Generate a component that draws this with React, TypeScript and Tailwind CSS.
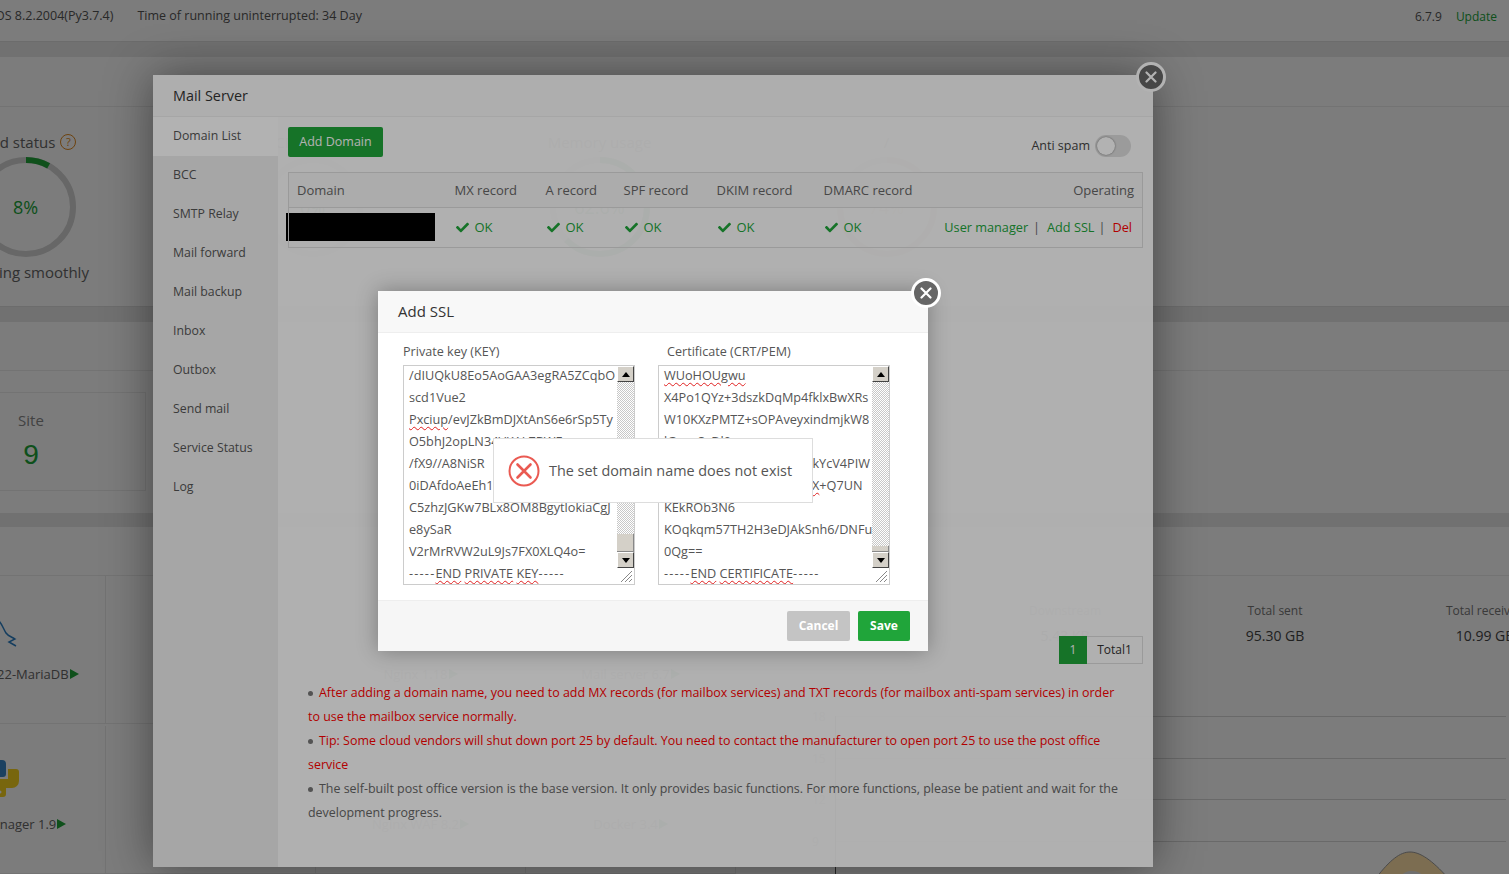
import React from 'react'
import { FaCheck } from 'react-icons/fa'

const font = "font-['Open_Sans','Noto_Sans',sans-serif]"
const squiggle = 'underline decoration-wavy decoration-[#e02020] decoration-1 underline-offset-2'

function Ring({ title, value, label, pct, color, help }: { title: string; value: string; label?: string; pct: number; color: string; help?: boolean }) {
  const c = 2 * Math.PI * 47
  return (
    <div className="w-[287px] shrink-0 flex flex-col items-center pt-[25px]">
      <div className="flex items-center gap-[5px] h-[20px] text-[15px] text-[#666]">
        {title}
        {help && (
          <span className="w-[16px] h-[16px] rounded-full border border-[#e08a20] text-[#e08a20] text-[11px] flex items-center justify-center">?</span>
        )}
      </div>
      <div className="relative w-[100px] h-[100px] mt-[5px]">
        <svg width="100" height="100" viewBox="0 0 100 100">
          <circle cx="50" cy="50" r="47" fill="none" stroke="#d4d4d4" strokeWidth="6" />
          <circle
            cx="50"
            cy="50"
            r="47"
            fill="none"
            stroke={color}
            strokeWidth="6"
            strokeDasharray={`${(c * pct) / 100} ${c}`}
            transform="rotate(-90 50 50)"
          />
        </svg>
        <div className="absolute inset-0 flex items-center justify-center text-[18px]" style={{ color }}>
          {value}
        </div>
      </div>
      {label && <div className="mt-[5px] text-[15px] leading-[20px] text-[#666] whitespace-nowrap">{label}</div>}
    </div>
  )
}

function Soft({ name, icon }: { name: string; icon?: React.ReactNode }) {
  return (
    <div className="w-[210px] h-[148px] shrink-0 border-r border-b border-[#ececec] flex flex-col items-center">
      <div className="h-[79px] mt-[5px] flex items-end justify-center">{icon}</div>
      <div className="mt-[5px] flex items-center text-[13px] leading-[18px] text-[#666] whitespace-nowrap">
        {name}
        <span className="ml-[1px] w-0 h-0 border-y-[5px] border-y-transparent border-l-[9px] border-l-[#20a53a]" />
      </div>
    </div>
  )
}

function Stat({ title, value }: { title: string; value: string }) {
  return (
    <div className="w-[210px] shrink-0 flex flex-col items-center">
      <div className="text-[12px] leading-[18px] text-[#777] whitespace-nowrap">{title}</div>
      <div className="mt-[6px] text-[14px] leading-[20px] text-[#444] whitespace-nowrap">{value}</div>
    </div>
  )
}

function AxisRow({ label, className }: { label: string; className: string }) {
  return (
    <div className={`relative border-t border-[#d8d8d8] ${className}`}>
      <span className="absolute left-[-24px] top-[-9px] text-[12px] leading-[18px] text-[#888]">{label}</span>
    </div>
  )
}

function Page() {
  return (
    <div className="bg-[#e8e8e8]">
      <div className="h-[42px] pb-[8px] bg-white border-b border-[#dedede] flex items-center justify-between text-[12.5px] text-[#555] pr-[12px]">
        <div className="flex ml-[-32px] gap-[24px]">
          <span>CentOS 8.2.2004(Py3.7.4)</span>
          <span>Time of running uninterrupted: 34 Day</span>
        </div>
        <div className="flex gap-[14px] text-[12px]">
          <span>6.7.9</span>
          <span className="text-[#20a53a]">Update</span>
        </div>
      </div>

      <section className="mt-[15px] h-[250px] bg-white border-b border-[#dedede]">
        <div className="h-[50px] border-b border-[#ececec]" />
        <div className="flex ml-[-118px]">
          <Ring title="Load status" value="8%" label="Running smoothly" pct={8} color="#20a53a" help />
          <Ring title="CPU usage" value="0%" pct={0} color="#20a53a" />
          <Ring title="Memory usage" value="62.6%" pct={62.6} color="#20a53a" />
          <Ring title="/" value="74%" pct={74} color="#e8c89a" />
        </div>
      </section>

      <section className="mt-[15px] h-[191px] bg-white">
        <div className="h-[49px] border-b border-[#ececec]" />
        <div className="ml-[-84px] mt-[21px] w-[230px] h-[99px] border border-[#ececec] flex flex-col items-center">
          <div className="mt-[17px] text-[15px] leading-[20px] text-[#888]">Site</div>
          <div className="mt-[8px] text-[28px] leading-[34px] text-[#20a53a] font-['Liberation_Sans',sans-serif]">9</div>
        </div>
      </section>

      <section className="mt-[14px] h-[400px] bg-white">
        <div className="h-[49px] border-b border-[#ececec]" />
        <div className="flex">
          <div className="ml-[-104px] w-[840px] shrink-0 flex flex-wrap">
            <Soft
              name="MySQL 10.4.22-MariaDB"
              icon={
                <svg width="32" height="30" viewBox="0 0 32 30" className="ml-[28px] mb-[9px]">
                  <path d="M0 0C3 3 5 9 7 12C9 15 13 16 16 18L10 21L17 25" fill="none" stroke="#2b7fc4" strokeWidth="1.5" />
                </svg>
              }
            />
            <Soft
              name="DNS Manager 2.6"
              icon={
                <div className="w-[46px] h-[46px] rounded-full border-4 border-[#e0d8d0] flex items-center justify-center text-[14px] font-bold text-[#e0d8d0] mb-[9px]">
                  DNS
                </div>
              }
            />
            <Soft name="Nginx 1.18" />
            <Soft name="Mail server 6.7" />
            <Soft
              name="Python Manager 1.9"
              icon={
                <svg width="38" height="38" viewBox="0 0 38 38" className="mb-[13px]">
                  <path d="M10 1h10a4 4 0 0 1 4 4v10a3 3 0 0 1-3 3H10v-2H0V5a4 4 0 0 1 4-4z" fill="#3a87c8" />
                  <path d="M26 10h8a3 3 0 0 1 3 3v9a7 7 0 0 1-7 7h-6v6a3 3 0 0 1-3 3h-8v-4l-2-14h15z" fill="#f6d21f" />
                  <circle cx="18" cy="33" r="1.5" fill="#fff" />
                </svg>
              }
            />
            <Soft
              name="Linux Tools 1.5"
              icon={
                <svg width="36" height="34" viewBox="0 0 36 34" fill="none" stroke="#dce0dc" strokeWidth="2" className="mb-[15px]">
                  <path d="M1 8h34v25H1zM10 8V1h16v7M1 18h12M23 18h12M13 16h10v5H13z" />
                </svg>
              }
            />
            <Soft name="Nginx WAF 8.2" />
            <Soft name="Docker 3.4" />
          </div>
          <div className="flex-1 min-w-0 flex flex-col">
            <div className="flex ml-[14px] pt-[26px]">
              <Stat title="Upstream" value="3.58 KB" />
              <Stat title="Downstream" value="5.43 KB" />
              <Stat title="Total sent" value="95.30 GB" />
              <Stat title="Total received" value="10.99 GB" />
            </div>
            <div className="relative mt-[70px] mr-[3px] ml-[99px] h-[160px] border-l border-[#555]">
              <AxisRow label="18" className="h-[42px]" />
              <AxisRow label="15" className="h-[41px]" />
              <AxisRow label="12" className="h-[42px]" />
              <AxisRow label="9" className="h-[35px]" />
              <svg width="80" height="30" viewBox="0 0 80 30" className="absolute left-[540px] top-[132px]">
                <path d="M0 30C14 12 24 4 34 4C44 4 56 12 72 30Z" fill="#ffe0a8" stroke="#999" />
                <path d="M22 30C28 24 32 23 36 23C42 23 46 26 50 30Z" fill="#e6e6e6" />
              </svg>
            </div>
          </div>
        </div>
      </section>
    </div>
  )
}

function CloseBtn({ className }: { className: string }) {
  return (
    <div className={`absolute w-[30px] h-[30px] rounded-full bg-[#666] border-[3px] border-white flex items-center justify-center ${className}`}>
      <svg width="12" height="12" viewBox="0 0 12 12">
        <path d="M1.5 1.5L10.5 10.5M10.5 1.5L1.5 10.5" stroke="#fff" strokeWidth="2.2" strokeLinecap="round" />
      </svg>
    </div>
  )
}

const navItems = ['Domain List', 'BCC', 'SMTP Relay', 'Mail forward', 'Mail backup', 'Inbox', 'Outbox', 'Send mail', 'Service Status', 'Log']

function Ok() {
  return (
    <span className="ml-[1px] flex items-center gap-[6px] text-[#20a53a]">
      <FaCheck className="w-[13px] h-[13px]" />
      OK
    </span>
  )
}

function Bullet() {
  return <span className="inline-block w-[5px] h-[5px] rounded-full bg-[#777] mr-[6px] align-middle" />
}

function MailServer() {
  return (
    <div className="absolute left-[153px] top-[75px] w-[1000px] h-[792px] bg-white/[0.96] shadow-[0_0_45px_rgba(0,0,0,0.45)] flex flex-col">
      <div className="h-[42px] shrink-0 border-b border-[#eee] bg-[#f8f8f8]/60 flex items-center pl-[20px] text-[14.4px] text-[#333]">Mail Server</div>
      <div className="flex flex-1 min-h-0">
        <div className="w-[125px] shrink-0 bg-[#eeeeee]">
          {navItems.map((item, i) => (
            <div key={item} className={`h-[39px] pl-[20px] flex items-center text-[12.3px] text-[#555] ${i === 0 ? 'bg-white' : ''}`}>
              {item}
            </div>
          ))}
        </div>
        <div className="flex-1 min-w-0 pt-[10px] px-[10px]">
          <div className="flex justify-between items-start h-[30px]">
            <button className="h-[30px] w-[95px] rounded-[2px] bg-[#20a53a] text-white text-[12.5px]">Add Domain</button>
            <div className="flex items-center gap-[5px] pt-[8px] pr-[12px] text-[12.5px] text-[#444]">
              Anti spam
              <span className="w-[36px] h-[22px] rounded-full bg-[#dfdfdf] flex items-center pl-[2px]">
                <span className="w-[18px] h-[18px] rounded-full bg-white shadow-[0_0_2px_rgba(0,0,0,0.5)]" />
              </span>
            </div>
          </div>
          <table className="mt-[15px] w-[855px] table-fixed border border-[#ddd] text-[13px] text-[#666]">
            <thead>
              <tr className="h-[35px] bg-[#f6f6f6] border-b border-[#ddd] font-normal text-left">
                <th className="w-[158px] pl-[8px] pt-[1px] font-normal">Domain</th>
                <th className="w-[91px] pl-[8px] pt-[1px] font-normal">MX record</th>
                <th className="w-[78px] pl-[8px] pt-[1px] font-normal">A record</th>
                <th className="w-[93px] pl-[8px] pt-[1px] font-normal">SPF record</th>
                <th className="w-[107px] pl-[8px] pt-[1px] font-normal">DKIM record</th>
                <th className="w-[120px] pl-[8px] pt-[1px] font-normal">DMARC record</th>
                <th className="pr-[8px] pt-[1px] font-normal text-right">Operating</th>
              </tr>
            </thead>
            <tbody>
              <tr className="h-[40px]">
                <td>
                  <div className="ml-[-3px] mb-[2px] w-[149px] h-[28px] bg-black" />
                </td>
                <td className="pl-[8px]"><Ok /></td>
                <td className="pl-[8px]"><Ok /></td>
                <td className="pl-[8px]"><Ok /></td>
                <td className="pl-[8px]"><Ok /></td>
                <td className="pl-[8px]"><Ok /></td>
                <td className="pr-[10px] text-right whitespace-nowrap text-[12.7px]">
                  <span className="text-[#20a53a]">User manager</span>
                  <span className="ml-[5px] mr-[7px]">|</span>
                  <span className="text-[#20a53a]">Add SSL</span>
                  <span className="ml-[4px] mr-[7px]">|</span>
                  <span className="text-[#f00]">Del</span>
                </td>
              </tr>
            </tbody>
          </table>
          <div className="mt-[388px] flex justify-end text-[12px]">
            <span className="w-[28px] h-[28px] bg-[#20a53a] text-white flex items-center justify-center">1</span>
            <span className="w-[56px] h-[28px] border border-[#ddd] border-l-0 text-[#333] flex items-center justify-center">Total1</span>
          </div>
          <ul className="mt-[17px] pl-[20px] text-[12.45px] leading-[24px] text-[#666] whitespace-nowrap">
            <li className="text-[#f00]">
              <Bullet />After adding a domain name, you need to add MX records (for mailbox services) and TXT records (for mailbox anti-spam services) in order
              <br />
              to use the mailbox service normally.
            </li>
            <li className="text-[#f00]">
              <Bullet />Tip: Some cloud vendors will shut down port 25 by default. You need to contact the manufacturer to open port 25 to use the post office
              <br />
              service
            </li>
            <li>
              <Bullet />The self-built post office version is the base version. It only provides basic functions. For more functions, please be patient and wait for the
              <br />
              development progress.
            </li>
          </ul>
        </div>
      </div>
      <CloseBtn className="left-[983px] top-[-13px]" />
    </div>
  )
}

function Arrow({ dir }: { dir: 'up' | 'down' }) {
  return (
    <div className="h-[16px] shrink-0 bg-[#d4d0c8] border border-t-white border-l-white border-r-[#444] border-b-[#444] flex items-center justify-center">
      <svg width="8" height="5" viewBox="0 0 8 5">
        <path d={dir === 'up' ? 'M4 0L8 5H0Z' : 'M0 0H8L4 5Z'} fill="#000" />
      </svg>
    </div>
  )
}

function FakeTextarea({ lines, thumb, thumbH }: { lines: React.ReactNode[]; thumb: number; thumbH: number }) {
  return (
    <div className="relative w-[232px] h-[220px] border border-[#ccc] flex overflow-hidden">
      <div className="flex-1 min-w-0 pl-[5px] -mt-[2px] text-[12.7px] leading-[22px] text-[#555] whitespace-nowrap overflow-hidden">
        {lines.map((l, i) => (
          <div key={i} className="h-[22px]">{l}</div>
        ))}
      </div>
      <div className="w-[17px] shrink-0 flex flex-col bg-[repeating-conic-gradient(#c8c8c8_0_25%,#ffffff_0_50%)] bg-[length:2px_2px]">
        <Arrow dir="up" />
        <div className="shrink-0" style={{ height: thumb }} />
        <div className="shrink-0 bg-[#d4d0c8] border-b border-r border-[#888]" style={{ height: thumbH }} />
        <Arrow dir="down" />
        <div className="h-[16px] shrink-0 bg-white" />
      </div>
      <svg width="14" height="14" viewBox="0 0 14 14" className="absolute right-[1px] bottom-[1px]">
        <path d="M13 2L2 13M13 6L6 13M13 10L10 13" stroke="#888" strokeWidth="1" />
      </svg>
    </div>
  )
}

const dashes = <span className="tracking-[1.2px]">-----</span>

const keyLines: React.ReactNode[] = [
  '/dIUQkU8Eo5AoGAA3egRA5ZCqbO',
  'scd1Vue2',
  <><span className={squiggle}>Pxciup</span>/evJZkBmDJXtAnS6e6rSp5Ty</>,
  'O5bhJ2opLN34VKALZBWF',
  '/fX9//A8NiSR',
  '0iDAfdoAeEh1',
  'C5zhzJGKw7BLx8OM8BgytlokiaCgJ',
  'e8ySaR',
  'V2rMrRVW2uL9Js7FX0XLQ4o=',
  <>{dashes}<span className={squiggle}>END</span> <span className={squiggle}>PRIVATE</span> <span className={squiggle}>KEY</span>{dashes}</>,
]

const certLines: React.ReactNode[] = [
  <span className={squiggle}>WUoHOUgwu</span>,
  'X4Po1QYz+3dszkDqMp4fklxBwXRs',
  'W10KXzPMTZ+sOPAveyxindmjkW8',
  'lGoaxSxDl0',
  <div className="text-right pr-[2px]">kYcV4PIW</div>,
  <div className="pl-[148px]"><span className={squiggle}>X</span>+Q7UN</div>,
  'KEkROb3N6',
  'KOqkqm57TH2H3eDJAkSnh6/DNFu',
  '0Qg==',
  <>{dashes}<span className={squiggle}>END</span> <span className={squiggle}>CERTIFICATE</span>{dashes}</>,
]

function AddSsl() {
  return (
    <div className="absolute left-[378px] top-[291px] w-[550px] h-[360px] bg-white shadow-[0_0_20px_rgba(0,0,0,0.3)] flex flex-col">
      <div className="h-[42px] shrink-0 bg-[#f8f8f8] border-b border-[#eee] flex items-center pl-[20px] text-[15px] text-[#333]">Add SSL</div>
      <div className="flex-1 pl-[25px] pt-[10px]">
        <div className="flex gap-[23px]">
          <div>
            <div className="h-[22px] text-[12.6px] leading-[18px] text-[#555]">Private key (KEY)</div>
            <FakeTextarea lines={keyLines} thumb={152} thumbH={18} />
          </div>
          <div>
            <div className="h-[22px] pl-[9px] text-[12.6px] leading-[18px] text-[#555]">Certificate (CRT/PEM)</div>
            <FakeTextarea lines={certLines} thumb={164} thumbH={6} />
          </div>
        </div>
      </div>
      <div className="h-[51px] shrink-0 bg-[#f6f6f6] border-t border-[#eee] flex items-center justify-end gap-[8px] pr-[18px]">
        <button className="w-[63px] h-[30px] rounded-[2px] bg-[#c4c4c4] text-white text-[12px] font-bold">Cancel</button>
        <button className="w-[52px] h-[30px] rounded-[2px] bg-[#20a53a] text-white text-[12px] font-bold">Save</button>
      </div>
      <CloseBtn className="left-[533px] top-[-13px]" />
    </div>
  )
}

function Toast() {
  return (
    <div className="absolute left-[493px] top-[438px] w-[320px] h-[65px] bg-white border border-[#ddd] flex items-center pl-[14px] gap-[9px] text-[14.4px] text-[#555]">
      <svg width="32" height="32" viewBox="0 0 32 32" className="shrink-0">
        <circle cx="16" cy="16" r="14.5" fill="none" stroke="#ea5a52" strokeWidth="2" />
        <path d="M9.5 9.5L22.5 22.5M22.5 9.5L9.5 22.5" stroke="#ea5a52" strokeWidth="2.6" strokeLinecap="round" />
      </svg>
      The set domain name does not exist
    </div>
  )
}

export default function App() {
  return (
    <div className={`relative w-[1509px] h-[874px] overflow-hidden ${font}`}>
      <Page />
      <div className="absolute inset-0 bg-black/30" />
      <MailServer />
      <div className="absolute inset-0 bg-black/30" />
      <AddSsl />
      <Toast />
    </div>
  )
}
